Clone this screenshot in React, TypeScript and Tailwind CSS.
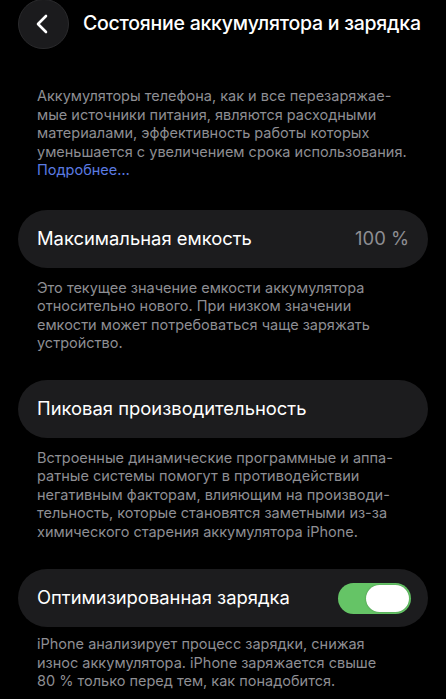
import React from "react";

const Desc = ({ lines, className = "" }: { lines: React.ReactNode[]; className?: string }) => (
  <div className={"px-[37px] text-[14.5px] leading-[18.5px] text-[#8e8e93] " + className}>
    {lines.map((l, i) => (
      <div key={i} className="whitespace-nowrap">
        {l}
      </div>
    ))}
  </div>
);

const Card = ({ children }: { children: React.ReactNode }) => (
  <div className="mx-[18px] flex h-[58px] items-center justify-between rounded-full bg-[#1c1c1e] pl-[19px] pr-[19px] text-[18.4px] text-white">
    {children}
  </div>
);

const Toggle = ({ on }: { on: boolean }) => (
  <div className={"relative -mr-[2px] h-[31px] w-[73px] rounded-full " + (on ? "bg-[#65c466]" : "bg-[#39393d]")}>
    <div className="absolute right-[2px] top-[2px] h-[27px] w-[43px] rounded-full bg-white shadow-[0_0_2px_rgba(0,0,0,0.3)]" />
  </div>
);

export default function App() {
  return (
    <div
      className="h-[699px] w-[446px] overflow-hidden bg-black"
      style={{ fontFamily: "Inter, 'Noto Sans', sans-serif" }}
    >
      {/* header */}
      <div className="flex items-center pl-[18px] -mt-[1px]">
        <button className="flex h-[50px] w-[51px] items-center justify-center rounded-full border border-[#2a2a2c] bg-[#1b1b1d]">
          <svg width="14" height="20" viewBox="0 0 14 20" fill="none" className="-ml-[3px]">
            <path d="M11 2 L3 10 L11 18" stroke="white" strokeWidth="2.6" strokeLinecap="round" strokeLinejoin="round" />
          </svg>
        </button>
        <h1 className="ml-[14px] text-[19.5px] font-medium tracking-[-0.25px] text-white">
          Состояние аккумулятора и зарядка
        </h1>
      </div>

      <Desc
        className="mt-[38px]"
        lines={[
          "Аккумуляторы телефона, как и все перезаряжае-",
          "мые источники питания, являются расходными",
          "материалами, эффективность работы которых",
          "уменьшается с увеличением срока использования.",
          <span className="text-[#5b7be2]">Подробнее…</span>,
        ]}
      />

      <div className="mt-[30px]">
        <Card>
          <span>Максимальная емкость</span>
          <span className="text-[#8e8e93]">100 %</span>
        </Card>
      </div>
      <Desc
        className="mt-[11px]"
        lines={[
          "Это текущее значение емкости аккумулятора",
          "относительно нового. При низком значении",
          "емкости может потребоваться чаще заряжать",
          "устройство.",
        ]}
      />

      <div className="mt-[27px]">
        <Card>
          <span>Пиковая производительность</span>
        </Card>
      </div>
      <Desc
        className="mt-[11px]"
        lines={[
          "Встроенные динамические программные и аппа-",
          "ратные системы помогут в противодействии",
          "негативным факторам, влияющим на производи-",
          "тельность, которые становятся заметными из-за",
          "химического старения аккумулятора iPhone.",
        ]}
      />

      <div className="mt-[28px]">
        <Card>
          <span>Оптимизированная зарядка</span>
          <Toggle on />
        </Card>
      </div>
      <Desc
        className="mt-[8px]"
        lines={[
          "iPhone анализирует процесс зарядки, снижая",
          "износ аккумулятора. iPhone заряжается свыше",
          "80 % только перед тем, как понадобится.",
        ]}
      />
    </div>
  );
}
